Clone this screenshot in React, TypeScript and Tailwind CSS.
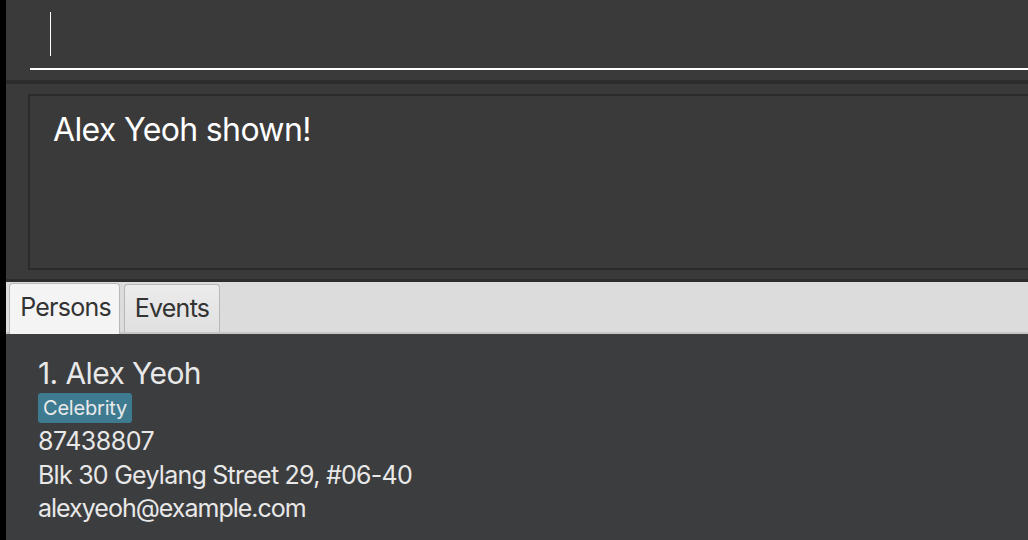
import React from "react";

const font = { fontFamily: "Inter, 'Open Sans', sans-serif" };

function CommandBox() {
	return (
		<div className="h-[80px] pl-[24px] pt-[12px]">
			<div className="ml-[20px] h-[44px] w-px bg-white" />
			<div className="mt-[12px] h-[2px] bg-white" />
		</div>
	);
}

function ResultBox() {
	return (
		<div className="pl-[22px] pt-[10px]">
			<div className="h-[176px] border-2 border-r-0 border-[#2b2b2b] px-[23px] pt-[16px]">
				<div className="text-[32px] leading-[36px] tracking-[-0.02em] text-white">Alex Yeoh shown!</div>
			</div>
		</div>
	);
}

function Tabs() {
	return (
		<div className="flex h-[52px] items-end gap-[4px] border-b-2 border-[#c6c6c6] bg-[#dcdcdc] pl-[3px]">
			<div className="relative -mb-[2px] flex h-[51px] w-[111px] items-center justify-center rounded-t-[4px] border border-b-0 border-[#b8b8b8] bg-[#f4f4f4] pb-[2px] pl-[2px] text-[25px] tracking-[-0.03em] text-[#333]">
				Persons
			</div>
			<div className="flex h-[48px] w-[96px] items-center justify-center rounded-t-[4px] border border-b-0 border-[#b8b8b8] bg-gradient-to-b from-[#ececec] to-[#e0e0e0] text-[25px] tracking-[-0.03em] text-[#333]">
				Events
			</div>
		</div>
	);
}

function PersonCard() {
	return (
		<div className="pl-[32px] pt-[20px] text-[#e8e8e8]">
			<div className="text-[30px] leading-[38px] tracking-[-0.02em]">1. Alex Yeoh</div>
			<div className="mt-[1px] inline-block rounded-[3px] bg-[#3e7b91] px-[5px] text-[20px] leading-[30px] tracking-[-0.01em] text-[#eaeaea]">
				Celebrity
			</div>
			<div className="mt-[1px] text-[25px] leading-[34px] tracking-[-0.02em]">87438807</div>
			<div className="text-[25px] leading-[34px] tracking-[-0.03em]">Blk 30 Geylang Street 29, #06-40</div>
			<div className="text-[25px] leading-[32px] tracking-[-0.04em]">alexyeoh@example.com</div>
		</div>
	);
}

export default function App() {
	return (
		<div className="flex h-[540px] w-[1028px] overflow-hidden bg-black" style={font}>
			<div className="w-[6px] shrink-0 bg-black" />
			<div className="flex flex-1 flex-col bg-[#3a3a3a]">
				<CommandBox />
				<div className="h-[4px] bg-[#2c2c2c]" />
				<ResultBox />
				<div className="h-[9px]" />
				<div className="h-[3px] bg-[#2c2c2c]" />
				<Tabs />
				<div className="flex-1 bg-[#3c3d3f]">
					<PersonCard />
				</div>
			</div>
		</div>
	);
}
